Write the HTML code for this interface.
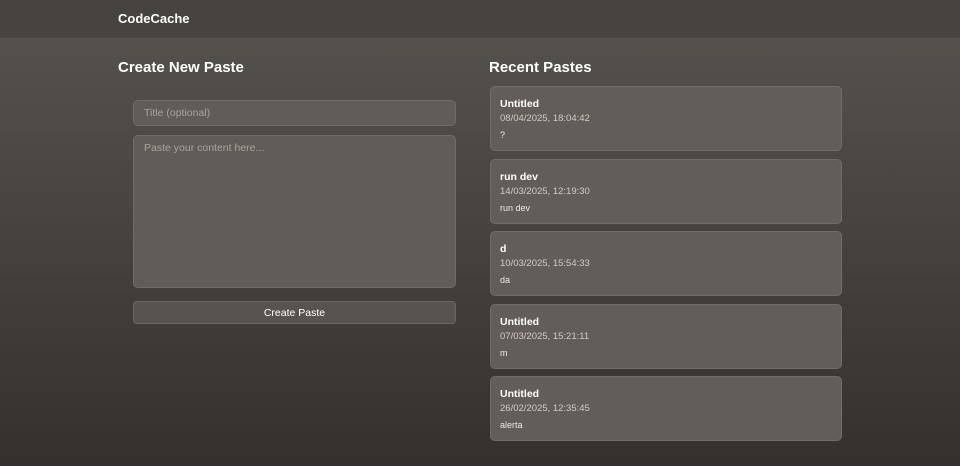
<!DOCTYPE html>
<html><head><style>
*{box-sizing:border-box;margin:0;padding:0}
body{width:960px;height:466px;overflow:hidden;font-family:"Liberation Sans",sans-serif;background:linear-gradient(180deg,#57534e 0%,#46423e 50%,#34302c 100%);color:#fff;position:relative}
.hdr{position:absolute;left:0;top:0;width:960px;height:38px;background:#47433f}
.logo{position:absolute;left:118px;top:11px;font-size:13px;font-weight:bold}
h2{position:absolute;font-size:15px;font-weight:bold;top:59px}
.in{position:absolute;left:133px;width:323px;background:#615c57;border:1px solid #716c67;border-radius:5px;color:#a8a39e;font-size:10.5px;padding-left:10px}
.btn{position:absolute;left:133px;top:301px;width:323px;height:23px;background:#58534e;border:1px solid #6a6560;border-radius:4px;font-size:10.5px;text-align:center;line-height:22px;color:#fff}
.card{position:absolute;left:490px;width:352px;height:65px;background:#625d58;border:1px solid #716c67;border-radius:5px}
.t{position:absolute;top:11px;left:9px;font-size:10.5px;font-weight:bold}
.d{position:absolute;top:26px;left:9px;font-size:9.5px;color:#d0cbc6}
.c{position:absolute;top:43px;left:9px;font-size:9px;color:#eeeae6}
</style></head><body>
<div class="hdr"><div class="logo">CodeCache</div></div>
<h2 style="left:118px">Create New Paste</h2>
<h2 style="left:489px">Recent Pastes</h2>
<div class="in" style="top:100px;height:26px;line-height:24px">Title (optional)</div>
<div class="in" style="top:135px;height:153px;padding-top:6px">Paste your content here...</div>
<div class="btn">Create Paste</div>
<div class="card" style="top:86px"><div class="t">Untitled</div><div class="d">08/04/2025, 18:04:42</div><div class="c">?</div></div>
<div class="card" style="top:159px"><div class="t">run dev</div><div class="d">14/03/2025, 12:19:30</div><div class="c">run dev</div></div>
<div class="card" style="top:231px"><div class="t">d</div><div class="d">10/03/2025, 15:54:33</div><div class="c">da</div></div>
<div class="card" style="top:304px"><div class="t">Untitled</div><div class="d">07/03/2025, 15:21:11</div><div class="c">m</div></div>
<div class="card" style="top:376px"><div class="t">Untitled</div><div class="d">26/02/2025, 12:35:45</div><div class="c">alerta</div></div>
</body></html>
